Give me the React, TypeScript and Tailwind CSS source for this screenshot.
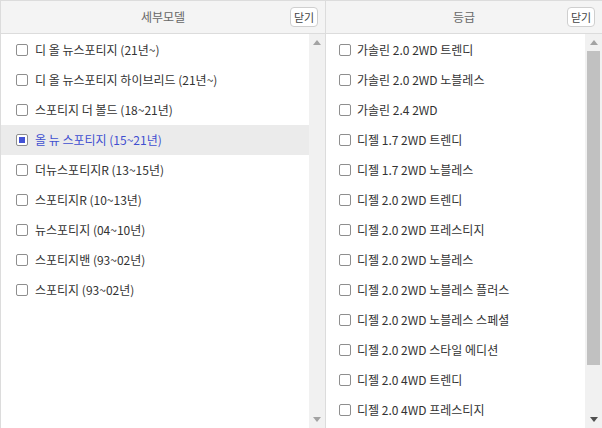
import { Fragment } from "react";

const MODELS = [
  "디 올 뉴스포티지 (21년~)",
  "디 올 뉴스포티지 하이브리드 (21년~)",
  "스포티지 더 볼드 (18~21년)",
  "올 뉴 스포티지 (15~21년)",
  "더뉴스포티지R (13~15년)",
  "스포티지R (10~13년)",
  "뉴스포티지 (04~10년)",
  "스포티지밴 (93~02년)",
  "스포티지 (93~02년)",
];

const GRADES = [
  "가솔린 2.0 2WD 트렌디",
  "가솔린 2.0 2WD 노블레스",
  "가솔린 2.4 2WD",
  "디젤 1.7 2WD 트렌디",
  "디젤 1.7 2WD 노블레스",
  "디젤 2.0 2WD 트렌디",
  "디젤 2.0 2WD 프레스티지",
  "디젤 2.0 2WD 노블레스",
  "디젤 2.0 2WD 노블레스 플러스",
  "디젤 2.0 2WD 노블레스 스페셜",
  "디젤 2.0 2WD 스타일 에디션",
  "디젤 2.0 4WD 트렌디",
  "디젤 2.0 4WD 프레스티지",
];

const FONT = { fontFamily: '"Noto Sans CJK KR", "Noto Sans", sans-serif' };

function Checkbox({ checked }: { checked?: boolean }) {
  return (
    <span className="grid size-[12px] shrink-0 place-items-center rounded-[2px] border border-[#8e8e8e] bg-white">
      {checked && <span className="size-[6px] bg-[#4352d6]" />}
    </span>
  );
}

function Header({ title }: { title: string }) {
  return (
    <div className="grid h-[34px] shrink-0 grid-cols-[1fr_auto_1fr] items-center border-y border-[#dcdcdc] bg-[#f4f4f4]">
      <span />
      <span className="text-[12px] text-[#666]">{title}</span>
      <button className="mr-[7px] h-[20px] w-[28px] justify-self-end rounded-[4px] border border-[#cfcfcf] bg-white text-[11px] leading-none text-[#444]">
        닫기
      </button>
    </div>
  );
}

function Arrow({ up, color }: { up?: boolean; color: string }) {
  return (
    <svg width="8" height="5" viewBox="0 0 8 5">
      <path d={up ? "M0 5 L4 0 L8 5 Z" : "M0 0 L8 0 L4 5 Z"} fill={color} />
    </svg>
  );
}

function Scrollbar({ thumb, width }: { thumb?: boolean; width: string }) {
  return (
    <div className={`flex shrink-0 flex-col items-center bg-[#f1f1f1] ${width}`}>
      <div className="flex h-[17px] w-full shrink-0 items-center justify-center">
        <Arrow up color="#a3a3a3" />
      </div>
      <div className="flex w-full flex-1 flex-col px-[2px]">
        {thumb && <div className="h-[314px] w-full bg-[#c1c1c1]" />}
      </div>
      <div className="flex h-[17px] w-full shrink-0 items-center justify-center">
        <Arrow color={thumb ? "#505050" : "#a3a3a3"} />
      </div>
    </div>
  );
}

export default function App() {
  return (
    <div className="flex h-[428px] w-[602px] overflow-hidden bg-white" style={FONT}>
      <section className="flex w-[326px] shrink-0 flex-col border-x border-[#dcdcdc]">
        <Header title="세부모델" />
        <div className="flex min-h-0 flex-1">
          <ul className="flex-1 pt-px">
            {MODELS.map((m, i) => {
              const sel = i === 3;
              return (
                <li
                  key={m}
                  className={`flex h-[30px] items-center gap-[7px] pl-[15px] text-[12px] ${
                    sel ? "bg-[#ebebeb] text-[#3f4fd0]" : "text-[#333]"
                  }`}
                >
                  <Checkbox checked={sel} />
                  <span>{m}</span>
                </li>
              );
            })}
          </ul>
          <Scrollbar width="w-[16px]" />
        </div>
      </section>
      <section className="flex flex-1 flex-col">
        <Header title="등급" />
        <div className="flex min-h-0 flex-1">
          <ul className="flex-1 pt-px">
            {GRADES.map((g) => (
              <Fragment key={g}>
                <li className="flex h-[30px] items-center gap-[6px] pl-[13px] text-[12px] text-[#333]">
                  <Checkbox />
                  <span>{g}</span>
                </li>
              </Fragment>
            ))}
          </ul>
          <Scrollbar thumb width="w-[17px]" />
        </div>
      </section>
    </div>
  );
}
